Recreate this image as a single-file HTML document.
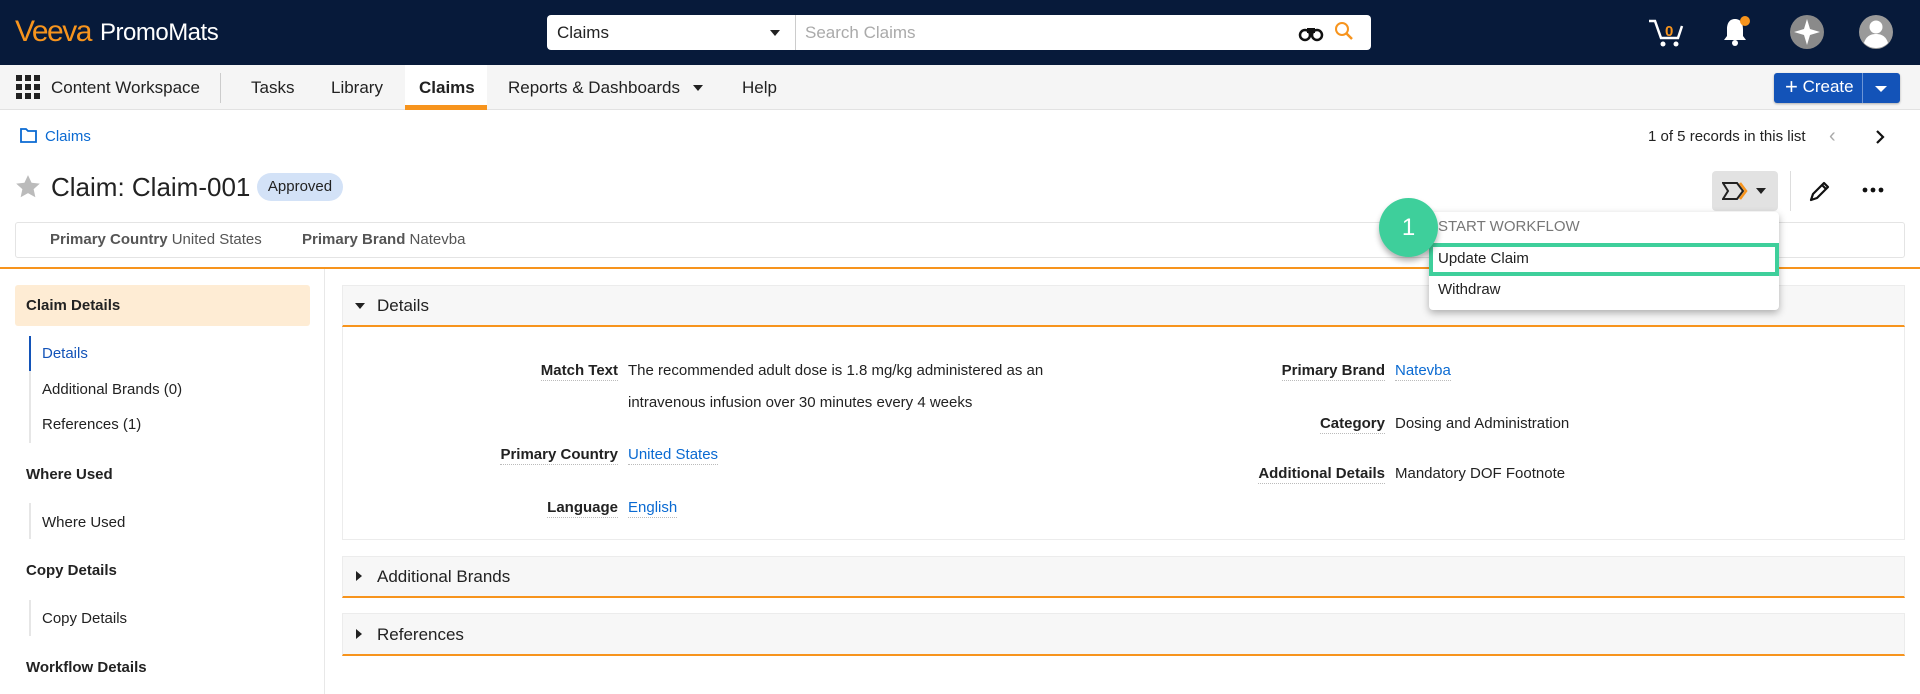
<!DOCTYPE html>
<html><head><meta charset="utf-8"><style>
*{box-sizing:border-box;margin:0;padding:0}
body{width:1920px;height:694px;overflow:hidden;background:#fff;font-family:"Liberation Sans",Arial,sans-serif;color:#222;position:relative}
.a{position:absolute;white-space:nowrap}
.top{position:absolute;left:0;top:0;width:1920px;height:65px;background:#071a3a}
.nav{position:absolute;left:0;top:65px;width:1920px;height:45px;background:#f5f5f5;border-bottom:1px solid #e2e2e2}
.navt{font-size:17px;color:#222;top:78px}
.lbl{font-weight:bold;font-size:15px;text-align:right;border-bottom:1px dotted #bbb;line-height:18px}
.val{font-size:15px;line-height:18px}
.lnk{color:#0a6ad2;border-bottom:1px dotted #bbb}
.sec{position:absolute;left:342px;width:1563px;background:#f7f7f7;border:1px solid #ececec;border-bottom:2px solid #f7941d}
.sec span{position:absolute;left:34px;font-size:17px;color:#222}
.side{font-size:15px}
</style></head><body>
<div class="top"></div>
<div class="a" style="left:15px;top:15px;font-size:30px;color:#f7941d;letter-spacing:-1.5px">Veeva</div>
<div class="a" style="left:100px;top:19px;font-size:24px;color:#fff;letter-spacing:-0.5px">PromoMats</div>
<div class="a" style="left:547px;top:15px;width:824px;height:35px;background:#fff;border-radius:4px"></div>
<div class="a" style="left:795px;top:15px;width:1px;height:35px;background:#ccc"></div>
<div class="a" style="left:557px;top:23px;font-size:17px;color:#222">Claims</div>
<div class="a" style="left:770px;top:30px;border-left:5px solid transparent;border-right:5px solid transparent;border-top:6px solid #222"></div>
<div class="a" style="left:805px;top:23px;font-size:17px;color:#aaa">Search Claims</div>
<svg class="a" style="left:1298px;top:24px" width="26" height="18" viewBox="0 0 26 18"><circle cx="7" cy="11" r="5" fill="none" stroke="#111" stroke-width="2.5"/><circle cx="19" cy="11" r="5" fill="none" stroke="#111" stroke-width="2.5"/><rect x="9" y="4" width="8" height="5" fill="#111"/></svg>
<svg class="a" style="left:1334px;top:21px" width="20" height="20" viewBox="0 0 20 20"><circle cx="8" cy="8" r="6" fill="none" stroke="#f7941d" stroke-width="2"/><line x1="12.5" y1="12.5" x2="18" y2="18" stroke="#f7941d" stroke-width="2.5"/></svg>
<svg class="a" style="left:1648px;top:18px" width="36" height="30" viewBox="0 0 36 30"><path d="M1 3h6l6 17h17l4-12" fill="none" stroke="#fff" stroke-width="2.5"/><circle cx="15" cy="26" r="2.5" fill="#fff"/><circle cx="28" cy="26" r="2.5" fill="#fff"/><text x="17" y="18" font-family="Liberation Sans" font-size="15" font-weight="bold" fill="#f7941d">0</text></svg>
<svg class="a" style="left:1722px;top:15px" width="30" height="34" viewBox="0 0 30 34"><path d="M13 4c-6 0-8 5-8 10v7l-3 4h22l-3-4v-7c0-5-2-10-8-10z" fill="#fff"/><circle cx="13" cy="28" r="3" fill="#fff"/><circle cx="23" cy="6" r="5" fill="#f7941d"/></svg>
<svg class="a" style="left:1790px;top:15px" width="34" height="34" viewBox="0 0 34 34"><circle cx="17" cy="17" r="17" fill="#8a8a8a"/><path d="M17 4l3 10 10 3-10 3-3 10-3-10-10-3 10-3z" fill="#fff"/></svg>
<svg class="a" style="left:1859px;top:15px" width="34" height="34" viewBox="0 0 34 34"><circle cx="17" cy="17" r="17" fill="#9a9a9a"/><circle cx="17" cy="12" r="6.5" fill="#fff"/><path d="M5 28c2-7 7-9 12-9s10 2 12 9c-3 3-7 5-12 5s-9-2-12-5z" fill="#fff"/></svg>

<div class="nav"></div>
<svg class="a" style="left:16px;top:75px" width="24" height="24" viewBox="0 0 24 24" fill="#222"><rect x="0" y="0" width="6" height="6"/><rect x="9" y="0" width="6" height="6"/><rect x="18" y="0" width="6" height="6"/><rect x="0" y="9" width="6" height="6"/><rect x="9" y="9" width="6" height="6"/><rect x="18" y="9" width="6" height="6"/><rect x="0" y="18" width="6" height="6"/><rect x="9" y="18" width="6" height="6"/><rect x="18" y="18" width="6" height="6"/></svg>
<div class="a navt" style="left:51px">Content Workspace</div>
<div class="a" style="left:220px;top:73px;width:1px;height:30px;background:#ccc"></div>
<div class="a navt" style="left:251px">Tasks</div>
<div class="a navt" style="left:331px">Library</div>
<div class="a" style="left:405px;top:65px;width:82px;height:45px;background:#fff;border-bottom:5px solid #f7941d"></div>
<div class="a navt" style="left:419px;font-weight:bold">Claims</div>
<div class="a navt" style="left:508px">Reports &amp; Dashboards</div>
<div class="a" style="left:693px;top:85px;border-left:5px solid transparent;border-right:5px solid transparent;border-top:6px solid #222"></div>
<div class="a navt" style="left:742px">Help</div>
<div class="a" style="left:1774px;top:73px;width:126px;height:30px;background:#1353b8;border-radius:3px;box-shadow:0 1px 2px rgba(0,0,0,.3)"></div>
<div class="a" style="left:1862px;top:73px;width:1px;height:30px;background:#6c95d6"></div>
<div class="a" style="left:1785px;top:77px;font-size:17px;color:#fff"><span style="font-size:22px;line-height:18px;vertical-align:-2px">+</span> Create</div>
<div class="a" style="left:1875px;top:86px;border-left:6px solid transparent;border-right:6px solid transparent;border-top:6px solid #fff"></div>

<svg class="a" style="left:20px;top:128px" width="17" height="15" viewBox="0 0 17 15"><path d="M1 1h5l2 2h8v11H1z" fill="none" stroke="#0a6ad2" stroke-width="1.8"/></svg>
<div class="a" style="left:45px;top:128px;font-size:15px;color:#0a6ad2">Claims</div>
<div class="a" style="left:1648px;top:128px;font-size:15px;color:#222">1 of 5 records in this list</div>
<div class="a" style="left:1829px;top:125px;font-size:20px;color:#aaa">‹</div>
<svg class="a" style="left:1875px;top:129px" width="10" height="16" viewBox="0 0 10 16"><path d="M2 2l6 6-6 6" fill="none" stroke="#111" stroke-width="2.2"/></svg>

<svg class="a" style="left:15px;top:174px" width="26" height="25" viewBox="0 0 24 23"><path d="M12 1l3.3 7 7.6.8-5.7 5.1 1.6 7.5L12 17.6 5.2 21.4l1.6-7.5L1.1 8.8 8.7 8z" fill="#bbb"/></svg>
<div class="a" style="left:51px;top:172px;font-size:26px;color:#222">Claim: Claim-001</div>
<div class="a" style="left:257px;top:173px;width:86px;height:28px;background:#d3e2f7;border-radius:14px;font-size:15px;text-align:center;line-height:28px;color:#222">Approved</div>

<div class="a" style="left:1712px;top:171px;width:66px;height:40px;background:#e2e2e2;border-radius:4px"></div>
<svg class="a" style="left:1722px;top:181px" width="28" height="20" viewBox="0 0 28 20"><path d="M1 2h14l6 8-6 8H1l5-8z" fill="none" stroke="#222" stroke-width="2"/><path d="M18 2l6 8-6 8" fill="none" stroke="#f7941d" stroke-width="2.5"/></svg>
<div class="a" style="left:1756px;top:188px;border-left:5px solid transparent;border-right:5px solid transparent;border-top:6px solid #222"></div>
<div class="a" style="left:1790px;top:171px;width:1px;height:40px;background:#ddd"></div>
<svg class="a" style="left:1808px;top:179px" width="24" height="24" viewBox="0 0 24 24"><path d="M3 21l2-6L16 4l4 4L9 19z M14 6l4 4" fill="none" stroke="#111" stroke-width="2.2" stroke-linejoin="round"/></svg>
<svg class="a" style="left:1862px;top:187px" width="22" height="6" viewBox="0 0 22 6"><circle cx="3" cy="3" r="2.4" fill="#111"/><circle cx="11" cy="3" r="2.4" fill="#111"/><circle cx="19" cy="3" r="2.4" fill="#111"/></svg>

<div class="a" style="left:15px;top:222px;width:1890px;height:36px;border:1px solid #e4e4e4;border-radius:3px"></div>
<div class="a" style="left:50px;top:231px;font-size:15px;color:#555"><b>Primary Country</b> United States</div>
<div class="a" style="left:302px;top:231px;font-size:15px;color:#555"><b>Primary Brand</b> Natevba</div>
<div class="a" style="left:0;top:267px;width:1920px;height:2px;background:#f7941d"></div>

<div class="a" style="left:324px;top:269px;width:1px;height:425px;background:#e8e8e8"></div>
<div class="a" style="left:15px;top:285px;width:295px;height:41px;background:#feecd4;border-radius:3px"></div>
<div class="a side" style="left:26px;top:297px;font-weight:bold">Claim Details</div>
<div class="a" style="left:29px;top:336px;width:2px;height:35px;background:#1353b8"></div>
<div class="a" style="left:29px;top:371px;width:2px;height:72px;background:#e6e6e6"></div>
<div class="a side" style="left:42px;top:345px;color:#1353b8">Details</div>
<div class="a side" style="left:42px;top:381px">Additional Brands (0)</div>
<div class="a side" style="left:42px;top:416px">References (1)</div>
<div class="a side" style="left:26px;top:466px;font-weight:bold">Where Used</div>
<div class="a" style="left:29px;top:503px;width:2px;height:36px;background:#e6e6e6"></div>
<div class="a side" style="left:42px;top:514px">Where Used</div>
<div class="a side" style="left:26px;top:562px;font-weight:bold">Copy Details</div>
<div class="a" style="left:29px;top:600px;width:2px;height:36px;background:#e6e6e6"></div>
<div class="a side" style="left:42px;top:610px">Copy Details</div>
<div class="a side" style="left:26px;top:659px;font-weight:bold">Workflow Details</div>

<div class="a" style="left:342px;top:285px;width:1563px;height:255px;border:1px solid #ececec"></div>
<div class="sec" style="top:285px;height:42px"><span style="top:10px">Details</span></div>
<div class="a" style="left:355px;top:303px;border-left:5px solid transparent;border-right:5px solid transparent;border-top:6px solid #222"></div>
<div class="a lbl" style="right:1302px;top:362px">Match Text</div>
<div class="a val" style="left:628px;top:362px">The recommended adult dose is 1.8 mg/kg administered as an</div>
<div class="a val" style="left:628px;top:394px">intravenous infusion over 30 minutes every 4 weeks</div>
<div class="a lbl" style="right:1302px;top:446px">Primary Country</div>
<div class="a val lnk" style="left:628px;top:446px">United States</div>
<div class="a lbl" style="right:1302px;top:499px">Language</div>
<div class="a val lnk" style="left:628px;top:499px">English</div>
<div class="a lbl" style="right:535px;top:362px">Primary Brand</div>
<div class="a val lnk" style="left:1395px;top:362px">Natevba</div>
<div class="a lbl" style="right:535px;top:415px">Category</div>
<div class="a val" style="left:1395px;top:415px">Dosing and Administration</div>
<div class="a lbl" style="right:535px;top:465px">Additional Details</div>
<div class="a val" style="left:1395px;top:465px">Mandatory DOF Footnote</div>

<div class="sec" style="top:556px;height:42px"><span style="top:10px">Additional Brands</span></div>
<div class="a" style="left:356px;top:571px;border-top:5px solid transparent;border-bottom:5px solid transparent;border-left:6px solid #222"></div>
<div class="sec" style="top:613px;height:43px"><span style="top:11px">References</span></div>
<div class="a" style="left:356px;top:629px;border-top:5px solid transparent;border-bottom:5px solid transparent;border-left:6px solid #222"></div>

<div class="a" style="left:1429px;top:212px;width:350px;height:98px;background:#fff;border-radius:4px;box-shadow:0 3px 8px rgba(0,0,0,.3)"></div>
<div class="a" style="left:1438px;top:218px;font-size:15px;color:#777">START WORKFLOW</div>
<div class="a" style="left:1429px;top:243px;width:350px;height:33px;border:4px solid #3ecf9b"></div>
<div class="a" style="left:1438px;top:250px;font-size:15px;color:#222">Update Claim</div>
<div class="a" style="left:1438px;top:281px;font-size:15px;color:#222">Withdraw</div>
<div class="a" style="left:1379px;top:198px;width:59px;height:59px;border-radius:50%;background:#3ecf9b;box-shadow:0 4px 6px rgba(0,0,0,.3);color:#fff;font-size:24px;text-align:center;line-height:59px">1</div>
</body></html>
